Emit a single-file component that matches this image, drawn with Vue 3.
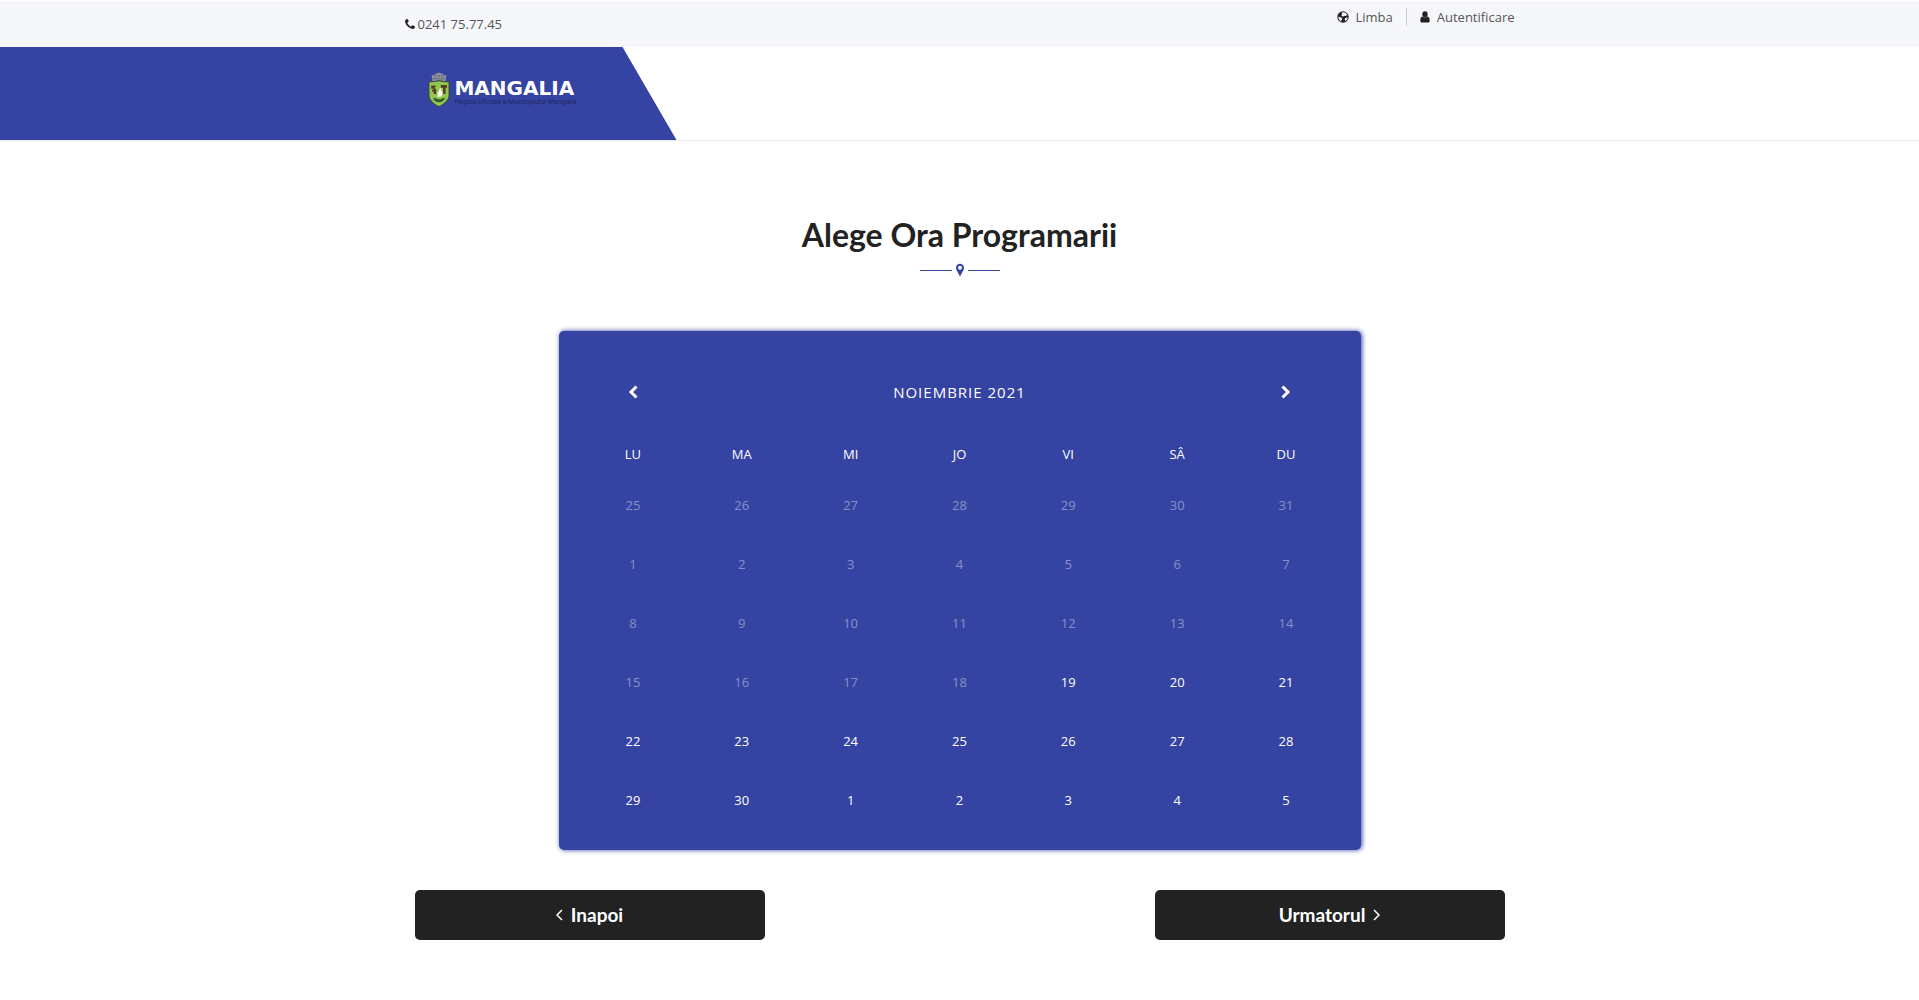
<template>
  <div class="page">
    <div class="topbar">
      <div class="container topbar-inner">
        <a class="phone" href="tel:0241757745">
          <svg class="icon" viewBox="0 0 11 11" aria-hidden="true">
            <path d="M11 8.4c0 .5-.3 1.4-.6 1.7-.6.6-1.4.9-2.1.8C6.100 10.500 4.300 9.500 2.900 8.100 1.500 6.700.5 4.900.1 2.900 0 2 .2 1.200.8.7 1.200.3 2.100 0 2.600 0c.4 0 1.400 2.200 1.500 2.600 0 .6-1.400 1.200-1.400 1.700 0 .9 2.900 3.900 3.900 3.900.6 0 1.100-1.400 1.700-1.400.4 0 2.700 1.200 2.700 1.600z" />
          </svg>
          <span>0241 75.77.45</span>
        </a>
        <nav class="links">
          <a href="#limba">
            <svg class="icon" viewBox="0 0 12 12" aria-hidden="true">
              <circle cx="6" cy="6" r="5.700" />
              <path class="land" d="M5.200 1.300 7.800 1.400 9.600 2.700 10.500 4.500 9.300 4.300 8.600 5 7.500 4.800 6.300 5.500 5 5.200 4.300 4.300 5.300 3.500 4.600 2.600zM1.300 5.600l1.600.6 1.500.4 1 1.100-.9 1.200-.3 1.500-1.400-.9-1.100-1.700zM8 7.300l1.700-.7 1 .2-.6 1.700-1.400 1.400-.9-.8z" />
            </svg>
            <span>Limba</span>
          </a>
          <a href="#autentificare">
            <svg class="icon" viewBox="0 0 12 12" aria-hidden="true">
              <ellipse cx="6" cy="3.300" rx="2.700" ry="3.100" />
              <path d="M3.200 5.400C1.900 5.900 1.300 7.400 1.300 9.700c0 1.100.7 1.900 1.700 1.900h6c1 0 1.700-.8 1.700-1.900 0-2.300-.6-3.800-1.900-4.300-1.500 1.500-4.100 1.500-5.600 0z" />
            </svg>
            <span>Autentificare</span>
          </a>
        </nav>
      </div>
    </div>

    <header class="header">
      <div class="brand-bg">
        <a class="logo" href="#acasa">
          <svg class="crest" viewBox="0 0 24 36" preserveAspectRatio="none" aria-hidden="true">
            <path fill="#8d9199" d="M4 3l3 .6.700-2.100h2.500L12 .3l1.800 1.200h2.500l.7 2.100 3-.6-.7 6.200H4.700z" />
            <path fill="#656b78" d="M5 6.200h14v1H5zM8 3h1.500v2H8zm6.500 0H16v2h-1.500zM11.200 3h1.600v2h-1.600z" />
            <path fill="#3c4b45" d="M.3 9c3.500.7 7.200.1 11.700-1 4.500 1.100 8.200 1.700 11.700 1v14.500c0 5.500-6.200 9.600-11.700 11.700C6.500 33.100.3 29 .3 23.500z" />
            <path fill="#91c653" d="M1.600 10.200c3.400.4 6.600 0 10.400-1 3.800 1 7 1.400 10.400 1v13.300c0 4.700-5.400 8.400-10.400 10.500C7 31.900 1.600 28.200 1.600 23.500z" />
            <path fill="#5a3d22" d="M3.500 13.500h5v1.200H7.400v2H9V22H6.200v-2.500H4.400v-1.800h1.500v-1H3.500zM14 13h6.700v2.800h-1.500V22h-2.800v-6.200H14z" />
            <path fill="#f4f7ee" d="M12.800 16l1.700.8-.2 2 1.700 1.500-.5 2.700-1.500 1.800h-4.200l1.300-2.800-1.300-.6 2-2.300z" />
            <path fill="#35572d" d="M5.500 26.200h3.200l1.500 1.100h4l1.300-1.100h3.200c-1 2.300-3.300 4-6.700 4-3.300 0-5.600-1.700-6.500-4z" />
          </svg>
          <span class="logo-text">
            <span class="logo-name">MANGALIA</span>
            <span class="logo-tag">Pagina Oficiala a Municipiului Mangalia</span>
          </span>
        </a>
      </div>
    </header>

    <main class="container main">
      <h1>Alege Ora Programarii</h1>
      <div class="divider">
        <svg viewBox="0 0 9 14" aria-hidden="true">
          <path fill-rule="evenodd" d="M4.500 0C7 0 9 2 9 4.500c0 .8-.2 1.500-.5 2.100L5.400 13c-.4.800-1.400.8-1.800 0L.5 6.600C.2 6 0 5.300 0 4.500 0 2 2 0 4.500 0zm0 2.300a2.200 2.200 0 1 0 0 4.400 2.200 2.200 0 0 0 0-4.400z" />
        </svg>
      </div>

      <section class="calendar">
        <div class="month">
          <button type="button" aria-label="Luna anterioara">
            <svg viewBox="0 0 10 14" aria-hidden="true"><path d="M8.500 1.500 3 7l5.500 5.500" /></svg>
          </button>
          <h2>Noiembrie 2021</h2>
          <button type="button" aria-label="Luna urmatoare">
            <svg viewBox="0 0 10 14" aria-hidden="true"><path d="M1.500 1.500 7 7l-5.500 5.500" /></svg>
          </button>
        </div>
        <table>
          <thead>
            <tr>
              <th v-for="name in weekdays" :key="name" scope="col">{{ name }}</th>
            </tr>
          </thead>
          <tbody>
            <tr v-for="(week, i) in weeks" :key="i">
              <td v-for="day in week" :key="day.index">
                <button
                  type="button"
                  :disabled="day.disabled"
                  :aria-pressed="selected === day.index"
                  @click="selected = day.index"
                >{{ day.label }}</button>
              </td>
            </tr>
          </tbody>
        </table>
      </section>

      <div class="actions">
        <button type="button">
          <svg viewBox="0 0 7 12" aria-hidden="true"><path d="M6 1 1 6l5 5" /></svg>
          <span>Inapoi</span>
        </button>
        <button type="button">
          <span>Urmatorul</span>
          <svg viewBox="0 0 7 12" aria-hidden="true"><path d="M1 1l5 5-5 5" /></svg>
        </button>
      </div>
    </main>
  </div>
</template>

<script setup>
import { ref } from 'vue'

const weekdays = ['Lu', 'Ma', 'Mi', 'Jo', 'Vi', 'Sâ', 'Du']
const selected = ref(null)

// The grid starts on Monday, 25 October 2021
const firstAvailable = new Date(2021, 10, 19)
const weeks = []
for (let w = 0; w < 6; w++) {
  const week = []
  for (let d = 0; d < 7; d++) {
    const index = w * 7 + d
    const date = new Date(2021, 9, 25 + index)
    week.push({ index, label: date.getDate(), disabled: date < firstAvailable })
  }
  weeks.push(week)
}
</script>

<style>
body {
  margin: 0;
  background: #fff;
}
</style>

<style scoped>
.page {
  font-family: "Open Sans", "Noto Sans", sans-serif;
  font-size: 13px;
  color: #222;
}

.container {
  box-sizing: border-box;
  max-width: 1110px;
  margin: 0 auto;
}

button {
  padding: 0;
  border: 0;
  background: none;
  color: inherit;
  font: inherit;
  cursor: pointer;
}

.topbar {
  border-top: 1px solid #fff;
  background: #f5f7fb;
}

.topbar-inner {
  display: flex;
  justify-content: space-between;
  align-items: flex-start;
  height: 46px;
}

.topbar a {
  display: flex;
  align-items: center;
  line-height: 18px;
  color: #555;
  text-decoration: none;
}

.icon {
  width: 12px;
  height: 12px;
  fill: #222;
}

.icon .land {
  fill: #f5f7fb;
}

.phone {
  gap: 3px;
  padding-top: 14px;
}

.phone .icon {
  width: 10px;
  height: 10px;
}

.links {
  display: flex;
  padding-top: 7px;
}

.links a {
  gap: 6px;
}

.links a + a {
  margin-left: 13px;
  padding-left: 12px;
  border-left: 1px solid #ccc;
}

.header {
  border-bottom: 1px solid #eaeaea;
}

.brand-bg {
  box-sizing: border-box;
  display: flex;
  justify-content: flex-end;
  width: calc(50% - 283px);
  min-width: 280px;
  height: 93px;
  padding: 25px 100px 0 0;
  background: #3543a2;
  clip-path: polygon(0 0, calc(100% - 54px) 0, 100% 100%, 0 100%);
}

.logo {
  display: flex;
  align-items: flex-start;
  gap: 4px;
  text-decoration: none;
}

.crest {
  width: 22px;
  height: 36px;
}

.logo-text {
  display: flex;
  flex-direction: column;
  padding-top: 6px;
  white-space: nowrap;
}

.logo-name {
  font: bold 20px/20px "DejaVu Sans", sans-serif;
  color: #fff;
}

.logo-tag {
  font: 7px/9px Roboto, sans-serif;
  color: #202a68;
}

.main {
  padding: 72px 10px 0;
}

h1 {
  margin: 0;
  font: bold 32px/44px Lato, sans-serif;
  text-align: center;
}

.divider {
  display: flex;
  justify-content: center;
  align-items: center;
  gap: 4px;
  margin-top: 6px;
}

.divider::before,
.divider::after {
  content: "";
  width: 32px;
  height: 1px;
  background: #3543a2;
}

.divider svg {
  width: 8px;
  height: 14px;
  fill: #3543a2;
}

.calendar {
  box-sizing: border-box;
  max-width: 802px;
  margin: 54px auto 0;
  padding: 20px 20px 21px;
  border-radius: 5px;
  background: #3543a2;
  box-shadow: 1px 0 5px #3543a2;
  color: #fff;
}

.month {
  display: grid;
  grid-template-columns: 1fr 5fr 1fr;
  align-items: center;
  height: 82px;
}

.month button {
  display: flex;
  justify-content: center;
  align-items: center;
  height: 40px;
}

.month svg {
  width: 10px;
  height: 14px;
  fill: none;
  stroke: #fff;
  stroke-width: 3;
}

h2 {
  margin: 0;
  font-size: 15px;
  font-weight: 500;
  line-height: 24px;
  letter-spacing: 1px;
  text-align: center;
  text-transform: uppercase;
}

table {
  width: 100%;
  border-collapse: collapse;
  table-layout: fixed;
}

th,
td {
  padding: 0;
  text-align: center;
}

th {
  height: 42px;
  font-weight: 500;
  text-transform: uppercase;
}

td button {
  width: 100%;
  height: 59px;
  display: block;
  font-weight: 500;
}

td button:disabled {
  opacity: 0.4;
  font-weight: 400;
  cursor: default;
}

td button[aria-pressed="true"] {
  border-radius: 5px;
  background: #222;
}

.actions {
  display: flex;
  justify-content: space-between;
  gap: 20px;
  margin-top: 40px;
}

.actions button {
  display: flex;
  justify-content: center;
  align-items: center;
  gap: 8px;
  width: 350px;
  height: 50px;
  border-radius: 5px;
  background: #222;
  color: #fff;
  font: bold 19px/24px Lato, sans-serif;
}

.actions svg {
  width: 7px;
  height: 12px;
  fill: none;
  stroke: #fff;
  stroke-width: 1.5;
}
</style>
